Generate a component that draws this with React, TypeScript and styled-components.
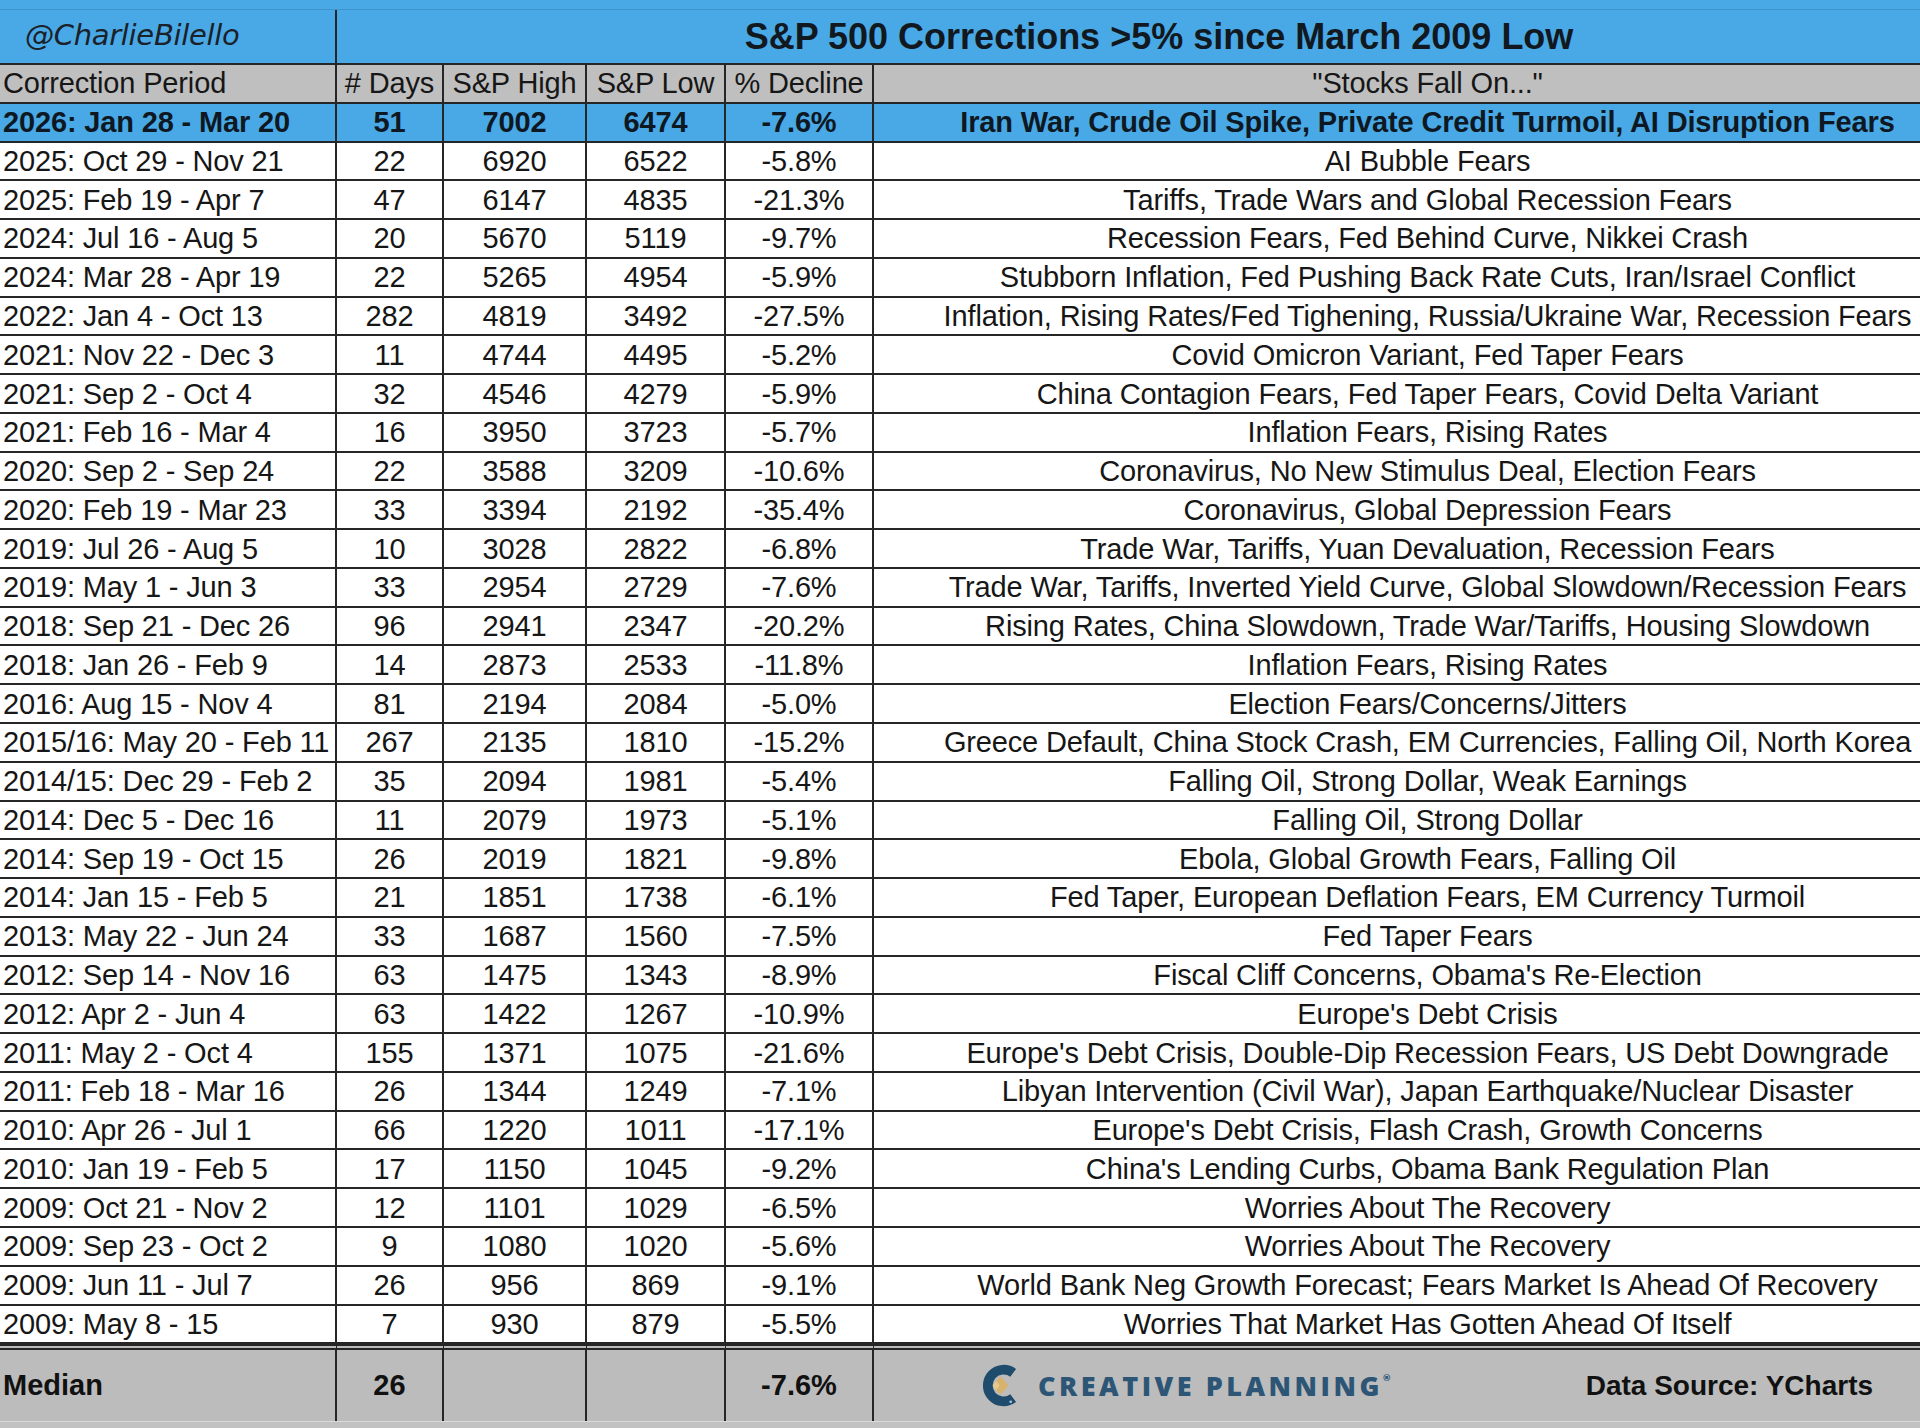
import React from 'react';
import styled, {createGlobalStyle, css} from 'styled-components';

const GlobalStyle = createGlobalStyle`
    html, body {
        margin: 0;
        padding: 0;
        overflow: hidden;
        background: #ffffff;
    }
`

const BLUE = '#49a9e6';
const GREY = '#bfbfbf';
const LINE = '#262626';

const Sheet = styled.div`
    width: 1981px;
    font-family: 'Liberation Sans', Arial, sans-serif;
    color: #161616;
`

const TopStrip = styled.div`
    height: 9px;
    background: ${BLUE};
    border-bottom: 1px solid #3f93c9;
`

const Grid = styled.table`
    width: 1981px;
    table-layout: fixed;
    border-collapse: separate;
    border-spacing: 0;
`

const TitleRow = styled.tr`
    height: 55px;
    background: ${BLUE};
`

const HandleCell = styled.td`
    padding: 0 0 4px 25px;
    border-right: 2px solid ${LINE};
    border-bottom: 2px solid ${LINE};
    font-family: 'DejaVu Sans', sans-serif;
    font-style: oblique;
    font-size: 29px;
    color: #1a2129;
    letter-spacing: -0.3px;
    white-space: nowrap;
`

const TitleCell = styled.td`
    padding: 0;
    border-bottom: 2px solid ${LINE};
    text-align: center;
    font-weight: 700;
    font-size: 36px;
    color: #111820;
`

const Row = styled.tr<{$highlight?: boolean; $head?: boolean}>`
    height: 38.77px;
    background: #ffffff;

    ${p => p.$highlight && css`
        background: ${BLUE};
        font-weight: 700;
        color: #0e1822;
    `}

    ${p => p.$head && css`
        background: ${GREY};
    `}
`

const Cell = styled.td<{$align?: 'left' | 'center'}>`
    padding: 0 0 0 ${p => p.$align === 'left' ? '3px' : '0'};
    border-right: 2px solid ${LINE};
    border-bottom: 2px solid ${LINE};
    text-align: ${p => p.$align || 'center'};
    font-size: 29px;
    letter-spacing: -0.15px;
    line-height: 34px;
    white-space: nowrap;
    overflow: hidden;

    &:last-child {
        border-right: none;
    }
`

const MedianRow = styled.tr`
    height: 76.6px;
    background: #bcbcbc;
    font-weight: 700;
`

const MedianCell = styled.td<{$align?: 'left' | 'center'}>`
    padding: 0 0 0 ${p => p.$align === 'left' ? '3px' : '0'};
    border-top: 6px double ${LINE};
    border-right: 2px solid ${LINE};
    text-align: ${p => p.$align || 'center'};
    font-size: 29px;
    color: #111;

    &:last-child {
        border-right: none;
    }
`

const Footer = styled.div`
    display: flex;
    align-items: center;
    justify-content: space-between;
    padding: 0 108px 0 109px;
`

const Logo = styled.div`
    display: flex;
    align-items: center;
    gap: 18px;
`

const LogoText = styled.span`
    font-family: 'Open Sans', 'Liberation Sans', sans-serif;
    font-weight: 800;
    font-size: 27px;
    letter-spacing: 3.5px;
    color: #2d5676;

    sup {
        font-size: 9px;
        letter-spacing: 0;
        vertical-align: 15px;
    }
`

const Source = styled.span`
    font-size: 28px;
    font-weight: 700;
    color: #111;
`

const BottomStrip = styled.div`
    height: 6px;
    background: #c2c2c2;
    border-top: 1px solid #dadada;
`

type Correction = [string, string, string, string, string, string];

const rows: Correction[] = [
    ['2026: Jan 28 - Mar 20', '51', '7002', '6474', '-7.6%', 'Iran War, Crude Oil Spike, Private Credit Turmoil, AI Disruption Fears'],
    ['2025: Oct 29 - Nov 21', '22', '6920', '6522', '-5.8%', 'AI Bubble Fears'],
    ['2025: Feb 19 - Apr 7', '47', '6147', '4835', '-21.3%', 'Tariffs, Trade Wars and Global Recession Fears'],
    ['2024: Jul 16 - Aug 5', '20', '5670', '5119', '-9.7%', 'Recession Fears, Fed Behind Curve, Nikkei Crash'],
    ['2024: Mar 28 - Apr 19', '22', '5265', '4954', '-5.9%', 'Stubborn Inflation, Fed Pushing Back Rate Cuts, Iran/Israel Conflict'],
    ['2022: Jan 4 - Oct 13', '282', '4819', '3492', '-27.5%', 'Inflation, Rising Rates/Fed Tighening, Russia/Ukraine War, Recession Fears'],
    ['2021: Nov 22 - Dec 3', '11', '4744', '4495', '-5.2%', 'Covid Omicron Variant, Fed Taper Fears'],
    ['2021: Sep 2 - Oct 4', '32', '4546', '4279', '-5.9%', 'China Contagion Fears, Fed Taper Fears, Covid Delta Variant'],
    ['2021: Feb 16 - Mar 4', '16', '3950', '3723', '-5.7%', 'Inflation Fears, Rising Rates'],
    ['2020: Sep 2 - Sep 24', '22', '3588', '3209', '-10.6%', 'Coronavirus, No New Stimulus Deal, Election Fears'],
    ['2020: Feb 19 - Mar 23', '33', '3394', '2192', '-35.4%', 'Coronavirus, Global Depression Fears'],
    ['2019: Jul 26 - Aug 5', '10', '3028', '2822', '-6.8%', 'Trade War, Tariffs, Yuan Devaluation, Recession Fears'],
    ['2019: May 1 - Jun 3', '33', '2954', '2729', '-7.6%', 'Trade War, Tariffs, Inverted Yield Curve, Global Slowdown/Recession Fears'],
    ['2018: Sep 21 - Dec 26', '96', '2941', '2347', '-20.2%', 'Rising Rates, China Slowdown, Trade War/Tariffs, Housing Slowdown'],
    ['2018: Jan 26 - Feb 9', '14', '2873', '2533', '-11.8%', 'Inflation Fears, Rising Rates'],
    ['2016: Aug 15 - Nov 4', '81', '2194', '2084', '-5.0%', 'Election Fears/Concerns/Jitters'],
    ['2015/16: May 20 - Feb 11', '267', '2135', '1810', '-15.2%', 'Greece Default, China Stock Crash, EM Currencies, Falling Oil, North Korea'],
    ['2014/15: Dec 29 - Feb 2', '35', '2094', '1981', '-5.4%', 'Falling Oil, Strong Dollar, Weak Earnings'],
    ['2014: Dec 5 - Dec 16', '11', '2079', '1973', '-5.1%', 'Falling Oil, Strong Dollar'],
    ['2014: Sep 19 - Oct 15', '26', '2019', '1821', '-9.8%', 'Ebola, Global Growth Fears, Falling Oil'],
    ['2014: Jan 15 - Feb 5', '21', '1851', '1738', '-6.1%', 'Fed Taper, European Deflation Fears, EM Currency Turmoil'],
    ['2013: May 22 - Jun 24', '33', '1687', '1560', '-7.5%', 'Fed Taper Fears'],
    ['2012: Sep 14 - Nov 16', '63', '1475', '1343', '-8.9%', "Fiscal Cliff Concerns, Obama's Re-Election"],
    ['2012: Apr 2 - Jun 4', '63', '1422', '1267', '-10.9%', "Europe's Debt Crisis"],
    ['2011: May 2 - Oct 4', '155', '1371', '1075', '-21.6%', "Europe's Debt Crisis, Double-Dip Recession Fears, US Debt Downgrade"],
    ['2011: Feb 18 - Mar 16', '26', '1344', '1249', '-7.1%', 'Libyan Intervention (Civil War), Japan Earthquake/Nuclear Disaster'],
    ['2010: Apr 26 - Jul 1', '66', '1220', '1011', '-17.1%', "Europe's Debt Crisis, Flash Crash, Growth Concerns"],
    ['2010: Jan 19 - Feb 5', '17', '1150', '1045', '-9.2%', "China's Lending Curbs, Obama Bank Regulation Plan"],
    ['2009: Oct 21 - Nov 2', '12', '1101', '1029', '-6.5%', 'Worries About The Recovery'],
    ['2009: Sep 23 - Oct 2', '9', '1080', '1020', '-5.6%', 'Worries About The Recovery'],
    ['2009: Jun 11 - Jul 7', '26', '956', '869', '-9.1%', 'World Bank Neg Growth Forecast; Fears Market Is Ahead Of Recovery'],
    ['2009: May 8 - 15', '7', '930', '879', '-5.5%', 'Worries That Market Has Gotten Ahead Of Itself'],
];

function LogoMark() {
    return (
        <svg width="37" height="45" viewBox="0 0 36 44">
            <polygon points="9,22 17,13 25,22 17,31" fill="#d8b36e" />
            <polygon points="9,22 13,17.5 16,22 13,26.5" fill="#e6c98f" />
            <path d="M 29.4 9.6 A 15.5 15.5 0 1 0 29.4 34.4" fill="none" stroke="#1f4c6d" strokeWidth="9.5" />
            <circle cx="27" cy="38" r="1.3" fill="#9cc9e6" />
        </svg>
    )
}

export default function App() {
    return (
        <Sheet>
            <GlobalStyle />
            <TopStrip />
            <Grid>
                <colgroup>
                    <col style={{width: 337}} />
                    <col style={{width: 107}} />
                    <col style={{width: 143}} />
                    <col style={{width: 139}} />
                    <col style={{width: 148}} />
                    <col style={{width: 1107}} />
                </colgroup>
                <tbody>
                    <TitleRow>
                        <HandleCell>@CharlieBilello</HandleCell>
                        <TitleCell colSpan={5}>S&amp;P 500 Corrections &gt;5% since March 2009 Low</TitleCell>
                    </TitleRow>
                    <Row $head>
                        <Cell $align="left">Correction Period</Cell>
                        <Cell># Days</Cell>
                        <Cell>S&amp;P High</Cell>
                        <Cell>S&amp;P Low</Cell>
                        <Cell>% Decline</Cell>
                        <Cell>"Stocks Fall On..."</Cell>
                    </Row>
                    {rows.map((r, i) => (
                        <Row key={r[0]} $highlight={i === 0}>
                            <Cell $align="left">{r[0]}</Cell>
                            <Cell>{r[1]}</Cell>
                            <Cell>{r[2]}</Cell>
                            <Cell>{r[3]}</Cell>
                            <Cell>{r[4]}</Cell>
                            <Cell>{r[5]}</Cell>
                        </Row>
                    ))}
                    <MedianRow>
                        <MedianCell $align="left">Median</MedianCell>
                        <MedianCell>26</MedianCell>
                        <MedianCell />
                        <MedianCell />
                        <MedianCell>-7.6%</MedianCell>
                        <MedianCell>
                            <Footer>
                                <Logo>
                                    <LogoMark />
                                    <LogoText>CREATIVE PLANNING<sup>®</sup></LogoText>
                                </Logo>
                                <Source>Data Source: YCharts</Source>
                            </Footer>
                        </MedianCell>
                    </MedianRow>
                </tbody>
            </Grid>
            <BottomStrip />
        </Sheet>
    )
}
